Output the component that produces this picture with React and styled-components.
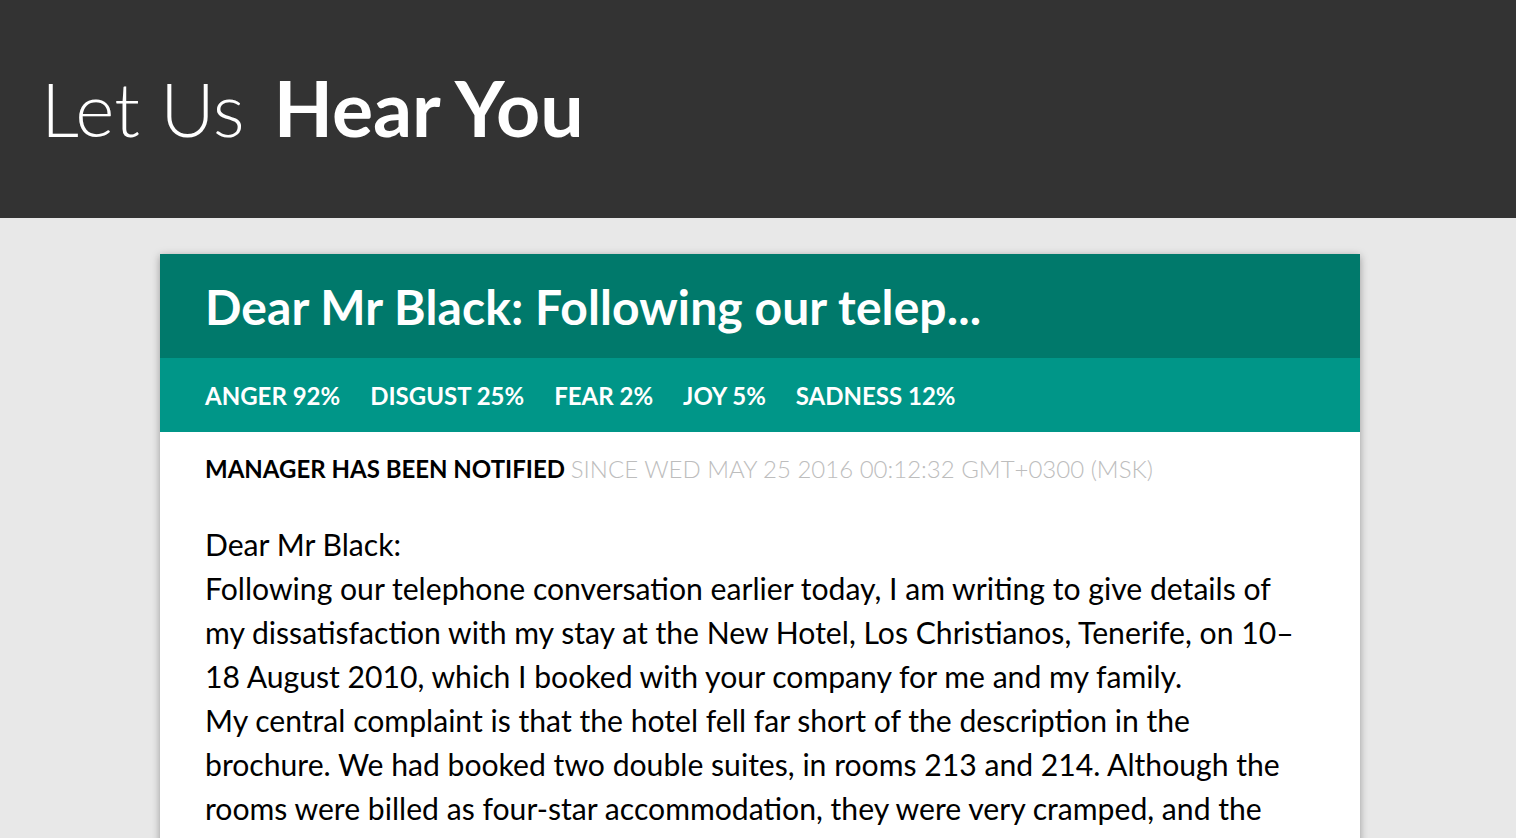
import React from "react";
import styled, { createGlobalStyle } from "styled-components";

const Global = createGlobalStyle`
  html, body { margin: 0; padding: 0; }
  body {
    background: #e8e8e8;
    font-family: Lato, "Open Sans", sans-serif;
    overflow: hidden;
  }
`;

const Header = styled.header`
  height: 218px;
  background: #333333;
  display: flex;
  align-items: center;
  padding: 0 41px;
  box-sizing: border-box;
`;

const Brand = styled.h1`
  margin: -4px 0 0;
  color: #ffffff;
  font-size: 75px;
  line-height: 1;
  font-weight: 300;
  display: flex;
  align-items: baseline;
  gap: 29px;
`;

const Strong = styled.span`
  font-weight: 700;
  font-size: 77px;
`;

const Main = styled.main`
  padding: 36px 156px 0 160px;
`;

const Card = styled.article`
  background: #ffffff;
  box-shadow: 0 2px 8px rgba(0, 0, 0, 0.35);
`;

const TitleBar = styled.div`
  height: 104px;
  background: #00796b;
  display: flex;
  align-items: center;
  padding: 0 45px;
  color: #fff;
  font-size: 48px;
  letter-spacing: 0.1px;
  font-weight: 700;
`;

const Emotions = styled.div`
  height: 74px;
  background: #009688;
  display: flex;
  align-items: center;
  gap: 30px;
  padding: 0 45px;
`;

const Emotion = styled.span`
  color: #fff;
  font-size: 24px;
  font-weight: 700;
`;

const Body = styled.div`
  padding: 22px 48px 0 45px;
`;

const Status = styled.div`
  font-size: 24px;
  line-height: 30px;
  text-transform: uppercase;
  color: #000;
  font-weight: 700;
`;

const Since = styled.span`
  color: #bdbdbd;
  font-weight: 300;
`;

const Letter = styled.div`
  margin-top: 38px;
  font-size: 30.15px;
  line-height: 44px;
  color: #000;
`;

const Para = styled.p`
  margin: 0;
`;

const emotions = [
  ["Anger", 92],
  ["Disgust", 25],
  ["Fear", 2],
  ["Joy", 5],
  ["Sadness", 12],
];

export default function App() {
  return (
    <>
      <Global />
      <Header>
        <Brand>
          <span>Let Us</span>
          <Strong>Hear You</Strong>
        </Brand>
      </Header>
      <Main>
        <Card>
          <TitleBar>Dear Mr Black: Following our telep...</TitleBar>
          <Emotions>
            {emotions.map(([n, v]) => (
              <Emotion key={n}>
                {n.toUpperCase()} {v}%
              </Emotion>
            ))}
          </Emotions>
          <Body>
            <Status>
              Manager has been notified{" "}
              <Since>since Wed May 25 2016 00:12:32 GMT+0300 (MSK)</Since>
            </Status>
            <Letter>
              <Para>Dear Mr Black:</Para>
              <Para>
                Following our telephone conversation earlier today, I am writing to give details of my
                dissatisfaction with my stay at the New Hotel, Los Christianos, Tenerife, on 10–18 August
                2010, which I booked with your company for me and my family.
              </Para>
              <Para>
                My central complaint is that the hotel fell far short of the description in the brochure.
                We had booked two double suites, in rooms 213 and 214. Although the rooms were billed as
                four-star accommodation, they were very cramped, and the furniture was old and worn.
              </Para>
            </Letter>
          </Body>
        </Card>
      </Main>
    </>
  );
}
